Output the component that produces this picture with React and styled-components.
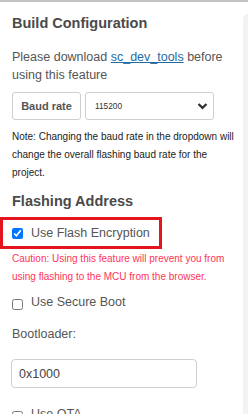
import React from "react";
import styled, { createGlobalStyle } from "styled-components";

const Global = createGlobalStyle`
  html, body { margin: 0; padding: 0; background: #fff; }
  body { font-family: "Liberation Sans", Arial, sans-serif; overflow: hidden; }
`;

const Page = styled.div`
  border-top: 2px solid #c4c4c4;
  display: flex;
  height: 412px;
`;

const Panel = styled.div`
  flex: 1;
  min-width: 0;
  padding: 12px 7px 0 12px;
  color: #555;
`;

const Side = styled.div`
  width: 5px;
  margin-top: 12px;
  background: #f3f3f3;
  border-top-left-radius: 6px;
`;

const Heading = styled.h3`
  margin: ${p => p.$mt || 0}px 0 0;
  font-size: 14.5px;
  font-weight: bold;
  color: #4a4a4a;
  line-height: 18px;
`;

const Text = styled.p`
  margin: 16px 0 0;
  font-size: 12.5px;
  line-height: 18px;
  color: #555;
`;

const Link = styled.a`
  color: #1f6aa5;
  text-decoration: underline;
`;

const BaudRow = styled.div`
  display: flex;
  gap: 4px;
  margin: 8px 0 0;
`;

const BaudLabel = styled.div`
  width: 69px;
  height: 28px;
  box-sizing: border-box;
  border: 1px solid #cfcfcf;
  border-radius: 3px;
  display: flex;
  align-items: center;
  justify-content: center;
  font-size: 11px;
  font-weight: bold;
  color: #555;
`;

const Select = styled.div`
  width: 129px;
  height: 28px;
  box-sizing: border-box;
  border: 1px solid #cfcfcf;
  border-radius: 3px;
  display: flex;
  align-items: center;
  justify-content: space-between;
  padding: 0 5px 0 9px;
  font-size: 8.3px;
  color: #333;
`;

const Note = styled.p`
  margin: ${p => p.$mt}px 0 0;
  font-size: 10px;
  line-height: 18px;
  color: ${p => (p.$red ? "#ff3358" : "#222")};
`;

const Highlight = styled.div`
  margin: 7px 0 0 -12px;
  width: 162px;
  height: 32px;
  box-sizing: border-box;
  border: 3px solid #e3161f;
  display: flex;
  align-items: center;
  padding-left: 9px;
`;

const CheckRow = styled.label`
  display: flex;
  align-items: center;
  gap: 8px;
  font-size: 12.5px;
  line-height: 18px;
  color: #555;
  margin: ${p => p.$mt || 0}px 0 0;
`;

const Check = styled.input.attrs({ type: "checkbox" })`
  width: 11px;
  height: 11px;
  margin: ${p => p.$dy || 0}px 0 0 0;
  flex: none;
  accent-color: #0075ff;
`;

const Label = styled.div`
  font-size: 12.5px;
  line-height: 18px;
  color: #555;
  margin: 14px 0 0;
`;

const Input = styled.div`
  width: 186px;
  height: 29px;
  box-sizing: border-box;
  border: 1px solid #cfcfcf;
  border-radius: 4px;
  margin: 16px 0 0 -1px;
  display: flex;
  align-items: center;
  padding-left: 7px;
  font-size: 12.5px;
  color: #444;
`;

const Chevron = () => (
  <svg width="11" height="8" viewBox="0 0 11 8">
    <path d="M1.5 2 L5.5 5.8 L9.5 2" fill="none" stroke="#333" strokeWidth="2.3" />
  </svg>
);

export default function App() {
  return (
    <>
      <Global />
      <Page>
        <Panel>
          <Heading>Build Configuration</Heading>
          <Text>
            Please download <Link>sc_dev_tools</Link> before using this feature
          </Text>
          <BaudRow>
            <BaudLabel>Baud rate</BaudLabel>
            <Select>
              <span>115200</span>
              <Chevron />
            </Select>
          </BaudRow>
          <Note $mt={8}>
            Note: Changing the baud rate in the dropdown will change the overall flashing baud rate for the project.
          </Note>
          <Heading $mt={10}>Flashing Address</Heading>
          <Highlight>
            <CheckRow>
              <Check defaultChecked $dy={1} />
              Use Flash Encryption
            </CheckRow>
          </Highlight>
          <Note $red $mt={1}>
            Caution: Using this feature will prevent you from using flashing to the MCU from the browser.
          </Note>
          <CheckRow $mt={7}>
            <Check $dy={4} />
            Use Secure Boot
          </CheckRow>
          <Label>Bootloader:</Label>
          <Input>0x1000</Input>
          <CheckRow $mt={17}>
            <Check $dy={4} />
            Use OTA
          </CheckRow>
        </Panel>
        <Side />
      </Page>
    </>
  );
}
